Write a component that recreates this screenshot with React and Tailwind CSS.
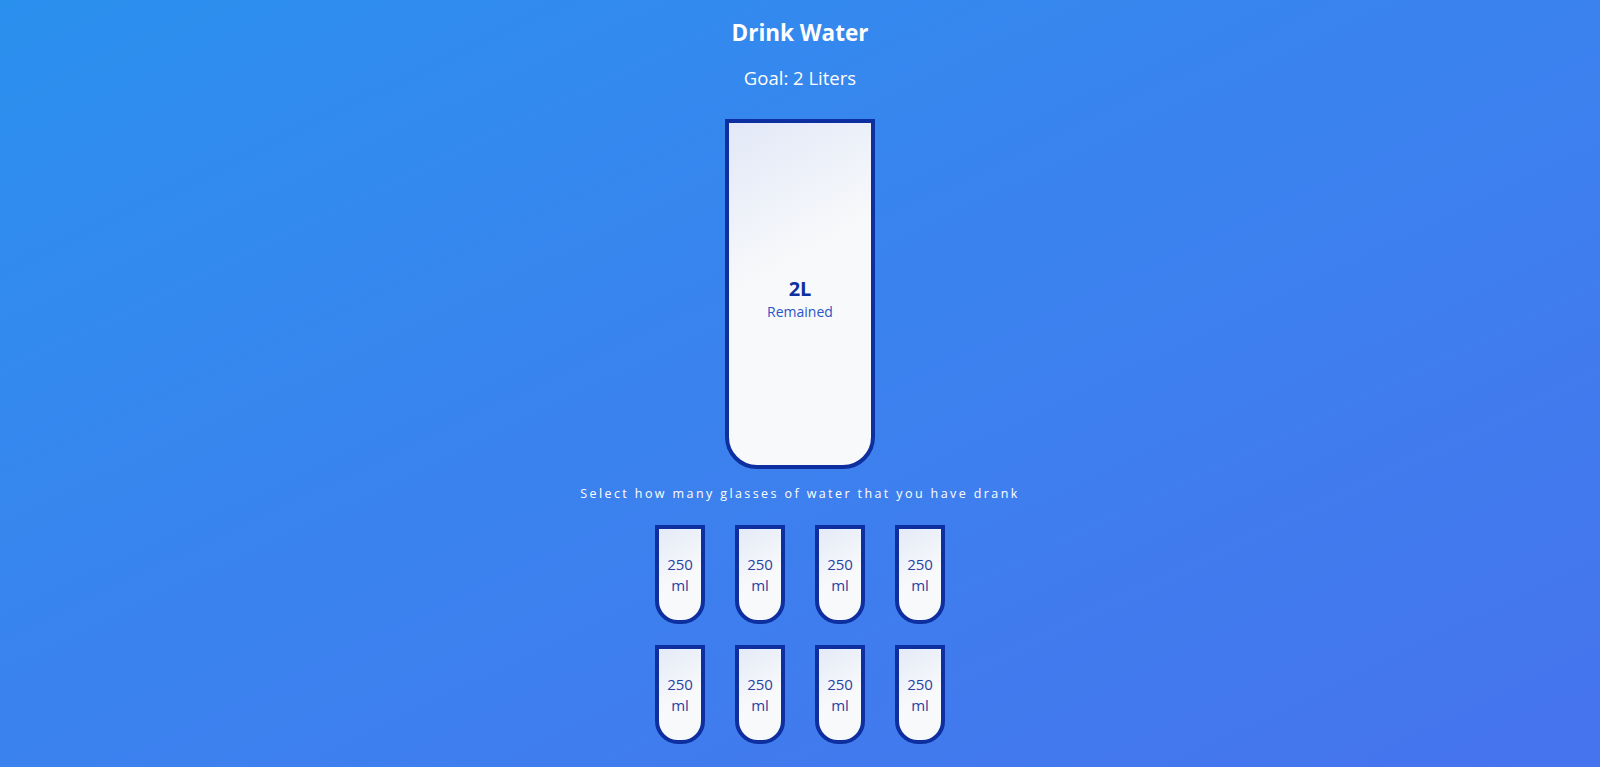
import { useState } from 'react';

const GLASSES = 8;

function SmallCup({ full, onClick }) {
  return (
    <button
      onClick={onClick}
      className={`w-[50px] h-[99px] box-border border-4 border-[#0d2f9f] rounded-b-[23px] flex flex-col items-center justify-center text-center text-[15px] leading-[21px] cursor-pointer ${
        full
          ? 'bg-[#6ab3f8] text-white'
          : 'bg-[linear-gradient(150deg,#e4eaf8_0%,#f8f9fa_55%)] text-[#2a3fa4]'
      }`}
    >
      <span>250</span>
      <span>ml</span>
    </button>
  );
}

export default function App() {
  const [filled, setFilled] = useState(0);

  const handleClick = (idx) => {
    // clicking the last full glass empties it again
    if (idx === filled - 1) setFilled(idx);
    else setFilled(idx + 1);
  };

  const liters = 2 - (filled * 250) / 1000;

  return (
    <div
      className="min-h-[767px] w-full flex flex-col items-center text-white bg-linear-to-br from-[#2a90ee] to-[#4673ee]"
      style={{ fontFamily: '"Open Sans", "Noto Sans", sans-serif' }}
    >
      <h1 className="mt-[18px] text-[22.5px] leading-[30px] font-bold">Drink Water</h1>
      <h3 className="mt-[17px] text-[18.5px] leading-[26px] font-normal">Goal: 2 Liters</h3>

      <div className="mt-[28px] w-[150px] h-[350px] box-border border-4 border-[#0d2f9f] rounded-b-[32px] flex flex-col overflow-hidden bg-[linear-gradient(150deg,#e2e8f8_0%,#f8f9fa_42%)] text-[#0d2f9f]">
        {liters > 0 && (
          <div className="flex-1 flex flex-col items-center justify-center text-center pt-[10px]">
            <span className="text-[20px] leading-[26px] font-bold">{liters}L</span>
            <small className="text-[14px] leading-[20px] text-[#2a55c8]">Remained</small>
          </div>
        )}
        {filled > 0 && (
          <div
            className="bg-[#6ab3f8] text-white flex items-center justify-center font-bold text-[20px]"
            style={{ height: `${(filled / GLASSES) * 342}px` }}
          >
            {(filled / GLASSES) * 100}%
          </div>
        )}
      </div>

      <p className="mt-[15px] text-[12.5px] leading-[20px] tracking-[2.4px]">
        Select how many glasses of water that you have drank
      </p>

      <div className="mt-[21px] grid grid-cols-4 gap-x-[30px] gap-y-[21px]">
        {Array.from({ length: GLASSES }).map((_, i) => (
          <SmallCup key={i} full={i < filled} onClick={() => handleClick(i)} />
        ))}
      </div>
    </div>
  );
}
